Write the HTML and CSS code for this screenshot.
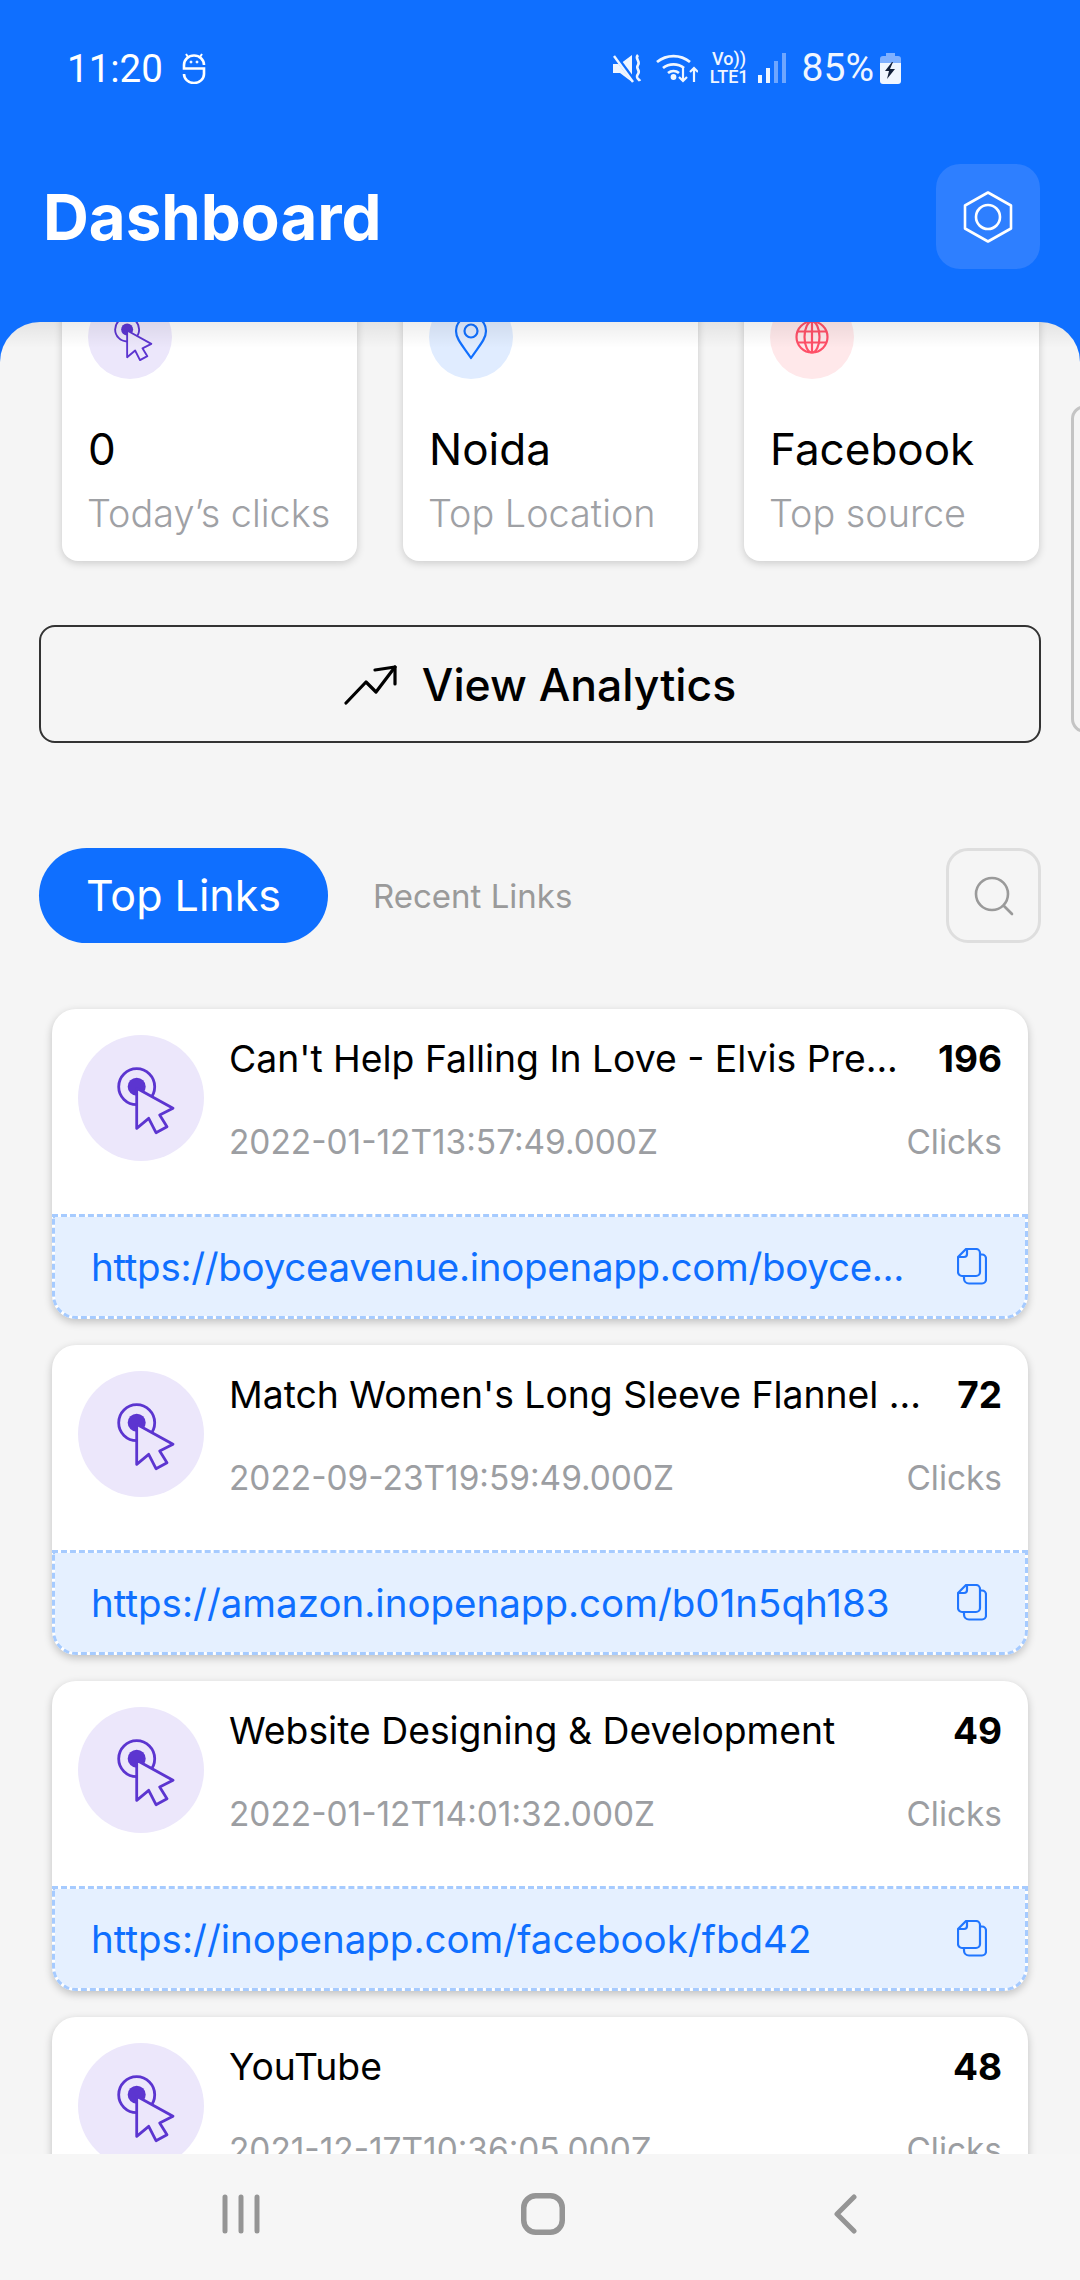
FILE: index.html
```html
<!DOCTYPE html>
<html lang="en">
<head>
    <meta charset="UTF-8">
    <meta name="viewport" content="width=device-width, initial-scale=1.0">
    <title>Dashboard</title>
    <link rel="stylesheet" href="styles.css">
</head>
<body>

    <svg class="defs" width="0" height="0">
        <symbol id="click" viewBox="0 0 126 126">
            <circle cx="58.7" cy="51.7" r="18" fill="none" stroke="#5c35d0" stroke-width="2.800"/>
            <circle cx="58.7" cy="51.7" r="9" fill="#5c35d0"/>
            <path d="M58.7 53.3 95 73.3 81.7 80 89 91.7 78 97.7 70.7 83.3 58.7 93.3Z" fill="#ece7fb" stroke="#5c35d0" stroke-width="2.800" stroke-linejoin="round"/>
        </symbol>
        <symbol id="copy" viewBox="0 0 30 37">
            <path d="M7 27v3.500a5 5 0 0 0 5 5h13a4 4 0 0 0 4-4v-21a4 4 0 0 0-4-4h-2" fill="none" stroke="#2176ff" stroke-width="2.200"/>
            <path d="M1 9 9 1h10a4 4 0 0 1 4 4v19a4 4 0 0 1-4 4H5a4 4 0 0 1-4-4Z" fill="none" stroke="#2176ff" stroke-width="2.200" stroke-linejoin="round"/>
            <path d="M1 9h6a3 3 0 0 0 3-3V1" fill="none" stroke="#2176ff" stroke-width="2.200"/>
        </symbol>
    </svg>

    <div class="app">
        <header class="header">
            <div class="status">
                <div class="status-left">
                    <span class="time">11:20</span>
                    <svg class="bot" width="24" height="31" viewBox="0 0 24 31" fill="none" stroke="#fff" stroke-width="2.600">
                        <path d="M4 1 6 4M20 1 18 4" stroke-width="2"/>
                        <path d="M22 12A10 9.500 0 0 0 2 12V15.500H22V21A10 9 0 0 1 2 21"/>
                        <circle cx="9" cy="9" r="1" fill="#fff" stroke-width="1"/>
                        <circle cx="15" cy="9" r="1" fill="#fff" stroke-width="1"/>
                    </svg>
                </div>
                <div class="status-right">
                    <svg width="29" height="29" viewBox="0 0 29 29">
                        <path d="M0 10h7L19 1v27L7 19H0Z" fill="#f0f6ff"/>
                        <path d="M1 0 21 27" stroke="#0f6fff" stroke-width="4.500"/>
                        <path d="M1 2 20 28" stroke="#f0f6ff" stroke-width="2.400"/>
                        <path d="M25 1c-4 4 3 6 0 10s3 5 0 9 1 5 2 7" fill="none" stroke="#f0f6ff" stroke-width="2.600"/>
                    </svg>
                    <svg class="wifi" width="42" height="30" viewBox="0 0 42 30" fill="none" stroke="#f0f6ff" stroke-width="2.800">
                        <path d="M1 9a26 26 0 0 1 33 0"/>
                        <path d="M7 15a17 17 0 0 1 21 0"/>
                        <path d="M12 20a9 9 0 0 1 11 0"/>
                        <circle cx="17.500" cy="24" r="1.500" fill="#f0f6ff"/>
                        <path d="M27 14v14M23 24l4 4 4-4M38 29V15M34 19l4-4 4 4" stroke-width="2.200"/>
                    </svg>
                    <div class="volte"><span>Vo))</span><span>LTE1</span></div>
                    <div class="signal"><i class="s1"></i><i class="s2"></i><i class="s3"></i><i class="s4"></i></div>
                    <span class="battery-text">85%</span>
                    <svg width="21" height="31" viewBox="0 0 21 31">
                        <path d="M6 0h9v3h3a3 3 0 0 1 3 3v4H0V6a3 3 0 0 1 3-3h3Z" fill="#7fb0ff"/>
                        <path d="M0 10h21v18a3 3 0 0 1-3 3H3a3 3 0 0 1-3-3Z" fill="#f0f6ff"/>
                        <path d="M12 9 5 18h4l-2 8 8-10h-5l3-7Z" fill="#14213a"/>
                    </svg>
                </div>
            </div>
            <div class="title-row">
                <h1>Dashboard</h1>
                <button class="settings">
                    <svg width="50" height="52" viewBox="0 0 50 52" fill="none" stroke="#fff" stroke-width="2.600" stroke-linejoin="round">
                        <path d="M25 1.500 48 14.500v23L25 50.500 2 37.500v-23Z"/>
                        <circle cx="25" cy="26" r="12"/>
                    </svg>
                </button>
            </div>
        </header>

        <main class="panel">
            <div class="content">
                <div class="stats">
                    <div class="stat">
                        <div class="circle purple"><svg width="84" height="84"><use href="#click"/></svg></div>
                        <div class="stat-value">0</div>
                        <div class="stat-label">Today’s clicks</div>
                    </div>
                    <div class="stat">
                        <div class="circle blue">
                            <svg width="34" height="46" viewBox="0 0 34 46" fill="none" stroke="#1170ff" stroke-width="2.200">
                                <path d="M17 44C9 32 2 25 2 17a15 15 0 0 1 30 0c0 8-7 15-15 27Z" stroke-linejoin="round"/>
                                <circle cx="17" cy="17" r="6.500"/>
                            </svg>
                        </div>
                        <div class="stat-value">Noida</div>
                        <div class="stat-label">Top Location</div>
                    </div>
                    <div class="stat">
                        <div class="circle red">
                            <svg width="34" height="34" viewBox="0 0 34 34" fill="none" stroke="#ff5068" stroke-width="2.200">
                                <circle cx="17" cy="17" r="15.500"/>
                                <ellipse cx="17" cy="17" rx="7.500" ry="15.500"/>
                                <path d="M17 1.500v31M2 11.500h30M2 22.500h30"/>
                            </svg>
                        </div>
                        <div class="stat-value">Facebook</div>
                        <div class="stat-label">Top source</div>
                    </div>
                </div>

                <button class="analytics">
                    <svg width="54" height="40" viewBox="0 0 54 40" fill="none" stroke="#000" stroke-width="3.200" stroke-linecap="round" stroke-linejoin="round">
                        <path d="M2 38 22 17l10 10L51 2"/>
                        <path d="M31 5 51 2v17"/>
                    </svg>
                    View Analytics
                </button>

                <div class="tabs">
                    <div class="tab-active">Top Links</div>
                    <div class="tab">Recent Links</div>
                    <button class="search">
                        <svg width="40" height="40" viewBox="0 0 40 40" fill="none" stroke="#9a9a9a" stroke-width="2.600" stroke-linecap="round">
                            <circle cx="18" cy="18" r="16"/>
                            <path d="M30 30 38 38"/>
                        </svg>
                    </button>
                </div>

                <div class="links">
                    <div class="link-card">
                        <div class="link-top">
                            <div class="circle big purple"><svg width="126" height="126"><use href="#click"/></svg></div>
                            <div class="link-info">
                                <div class="link-row">
                                    <span class="link-title">Can't Help Falling In Love - Elvis Pre...</span>
                                    <span class="link-count">196</span>
                                </div>
                                <div class="link-row sub">
                                    <span>2022-01-12T13:57:49.000Z</span>
                                    <span>Clicks</span>
                                </div>
                            </div>
                        </div>
                        <div class="link-url">
                            <span class="tight">https://boyceavenue.inopenapp.com/boyce...</span>
                            <svg width="30" height="37"><use href="#copy"/></svg>
                        </div>
                    </div>
                    <div class="link-card">
                        <div class="link-top">
                            <div class="circle big purple"><svg width="126" height="126"><use href="#click"/></svg></div>
                            <div class="link-info">
                                <div class="link-row">
                                    <span class="link-title">Match Women's Long Sleeve Flannel ...</span>
                                    <span class="link-count">72</span>
                                </div>
                                <div class="link-row sub">
                                    <span>2022-09-23T19:59:49.000Z</span>
                                    <span>Clicks</span>
                                </div>
                            </div>
                        </div>
                        <div class="link-url">
                            <span>https://amazon.inopenapp.com/b01n5qh183</span>
                            <svg width="30" height="37"><use href="#copy"/></svg>
                        </div>
                    </div>
                    <div class="link-card">
                        <div class="link-top">
                            <div class="circle big purple"><svg width="126" height="126"><use href="#click"/></svg></div>
                            <div class="link-info">
                                <div class="link-row">
                                    <span class="link-title">Website Designing &amp; Development</span>
                                    <span class="link-count">49</span>
                                </div>
                                <div class="link-row sub">
                                    <span>2022-01-12T14:01:32.000Z</span>
                                    <span>Clicks</span>
                                </div>
                            </div>
                        </div>
                        <div class="link-url">
                            <span>https://inopenapp.com/facebook/fbd42</span>
                            <svg width="30" height="37"><use href="#copy"/></svg>
                        </div>
                    </div>
                    <div class="link-card">
                        <div class="link-top">
                            <div class="circle big purple"><svg width="126" height="126"><use href="#click"/></svg></div>
                            <div class="link-info">
                                <div class="link-row">
                                    <span class="link-title">YouTube</span>
                                    <span class="link-count">48</span>
                                </div>
                                <div class="link-row sub">
                                    <span>2021-12-17T10:36:05.000Z</span>
                                    <span>Clicks</span>
                                </div>
                            </div>
                        </div>
                    </div>
                </div>
            </div>
            <div class="peek"></div>
            <div class="fade"></div>
        </main>

        <nav class="nav">
            <svg width="38" height="40" viewBox="0 0 38 40" fill="none" stroke="#959595" stroke-width="5" stroke-linecap="round">
                <path d="M3 3v34M19 3v34M35 3v34"/>
            </svg>
            <svg width="44" height="42" viewBox="0 0 44 42" fill="none" stroke="#959595" stroke-width="5.500">
                <rect x="2.750" y="2.750" width="38.500" height="36.500" rx="12"/>
            </svg>
            <svg width="24" height="40" viewBox="0 0 24 40" fill="none" stroke="#959595" stroke-width="5" stroke-linecap="round" stroke-linejoin="round">
                <path d="M21 3 4 20l17 17"/>
            </svg>
        </nav>
    </div>

</body>
</html>
```

FILE: styles.css
```css
* {
    box-sizing: border-box;
}
body {
    margin: 0;
    font-family: Inter, "Noto Sans", sans-serif;
    background-color: #0f6fff;
}
button {
    font-family: inherit;
    cursor: pointer;
}
.defs {
    display: block;
    height: 0;
}
.app {
    width: 1080px;
    height: 2280px;
    display: flex;
    flex-direction: column;
    overflow: hidden;
    background-color: #0f6fff;
}

/* header */
.header {
    height: 322px;
    flex: none;
    color: white;
}
.status {
    height: 136px;
    display: flex;
    justify-content: space-between;
    align-items: center;
    padding: 0 179px 0 67px;
    font-family: Roboto, sans-serif;
}
.status-left,
.status-right {
    display: flex;
    align-items: center;
}
.time {
    font-size: 38.5px;
    margin-right: 19px;
}
.status-right svg {
    flex: none;
}
.wifi {
    margin-left: 14px;
}
.volte {
    display: flex;
    flex-direction: column;
    align-items: center;
    width: 39px;
    margin-left: 12px;
    font-size: 18px;
    font-weight: 500;
    line-height: 18px;
    color: #f0f6ff;
}
.signal {
    display: flex;
    align-items: flex-end;
    gap: 4px;
    height: 30px;
    margin-left: 9px;
}
.signal i {
    display: block;
    width: 4px;
    background-color: #f0f6ff;
}
.signal .s1 { height: 8px; }
.signal .s2 { height: 15px; }
.signal .s3 { height: 22px; background-color: #6ea6ff; }
.signal .s4 { height: 30px; background-color: #6ea6ff; }
.battery-text {
    font-size: 39px;
    margin-left: 16px;
    margin-right: 6px;
    color: #f0f6ff;
}
.title-row {
    display: flex;
    justify-content: space-between;
    align-items: center;
    margin-top: 28px;
    padding: 0 40px 0 43px;
}
h1 {
    margin: 0;
    font-size: 63.5px;
    font-weight: 700;
}
.settings {
    width: 104px;
    height: 105px;
    display: flex;
    align-items: center;
    justify-content: center;
    border: none;
    border-radius: 24px;
    background-color: #2e7fff;
}

/* scrolled panel */
.panel {
    flex: 1;
    position: relative;
    overflow: hidden;
    background-color: #f5f5f5;
    border-radius: 40px 40px 0 0;
}
.content {
    margin-top: -52px;
}
.fade {
    position: absolute;
    top: 0;
    left: 0;
    right: 0;
    height: 26px;
    background: linear-gradient(rgba(0, 0, 0, 0.07), rgba(0, 0, 0, 0));
}
.peek {
    position: absolute;
    left: 1071px;
    top: 83px;
    width: 30px;
    height: 328px;
    border: 3px solid #c4c4c4;
    border-radius: 14px;
}
.stats {
    display: flex;
    gap: 46px;
    padding-left: 62px;
}
.stat {
    width: 295px;
    height: 291px;
    flex: none;
    padding: 25px 26px 0;
    background-color: #fff;
    border-radius: 16px;
    box-shadow: 0px 2px 8px rgba(0, 0, 0, 0.18);
}
.circle {
    display: flex;
    align-items: center;
    justify-content: center;
    width: 84px;
    height: 84px;
    border-radius: 50%;
    flex: none;
}
.circle.big {
    width: 126px;
    height: 126px;
}
.purple { background-color: #ece7fb; }
.blue { background-color: #e0ecff; }
.red { background-color: #ffe8ea; }
.stat-value {
    margin-top: 42px;
    font-size: 44px;
    line-height: 56px;
    color: #000;
}
.stat-label {
    margin: 12px 0 0 -1px;
    font-size: 37.8px;
    font-weight: 300;
    line-height: 48px;
    color: #9fa1a5;
    white-space: nowrap;
}
.analytics {
    display: flex;
    align-items: center;
    justify-content: center;
    gap: 24px;
    width: 1002px;
    height: 118px;
    margin: 64px 0 0 39px;
    padding: 2px 0 0;
    background: none;
    border: 2px solid #333;
    border-radius: 16px;
    font-size: 44.5px;
    font-weight: 500;
    color: #000;
}
.tabs {
    display: flex;
    align-items: center;
    margin-top: 105px;
    padding: 0 39px 0 39px;
}
.tab-active {
    width: 289px;
    height: 95px;
    line-height: 95px;
    text-align: center;
    background-color: #0f6fff;
    border-radius: 48px;
    font-size: 43px;
    color: white;
}
.tab {
    margin-left: 45px;
    font-size: 33px;
    color: #9a9a9a;
}
.search {
    width: 95px;
    height: 95px;
    margin-left: auto;
    display: flex;
    align-items: center;
    justify-content: center;
    background: none;
    border: 3px solid #dedede;
    border-radius: 22px;
}

/* link cards */
.links {
    display: flex;
    flex-direction: column;
    gap: 26px;
    margin-top: 66px;
    padding-left: 52px;
}
.link-card {
    width: 976px;
    height: 310px;
    flex: none;
    background-color: #fff;
    border-radius: 24px;
    box-shadow: 0px 3px 8px rgba(0, 0, 0, 0.22);
}
.link-top {
    height: 205px;
    display: flex;
    gap: 25px;
    padding: 26px 26px 0;
}
.link-info {
    flex: 1;
}
.link-row {
    display: flex;
    justify-content: space-between;
    align-items: center;
    height: 46px;
    font-size: 37.3px;
    color: #000;
    white-space: nowrap;
}
.link-count {
    font-size: 37px;
    font-weight: 700;
}
.link-row.sub {
    margin-top: 38px;
    font-size: 33.4px;
    color: #9c9ea2;
}
.link-url {
    height: 105px;
    display: flex;
    justify-content: space-between;
    align-items: center;
    padding: 0 38px 0 36px;
    background-color: #e5f0ff;
    background-clip: padding-box;
    border: 3px dashed #a6cbff;
    border-radius: 0 0 24px 24px;
    font-size: 38.5px;
    color: #0f6fff;
    white-space: nowrap;
}
.tight {
    letter-spacing: -0.3px;
}

/* android nav */
.nav {
    height: 126px;
    flex: none;
    display: grid;
    grid-template-columns: repeat(3, 302px);
    justify-content: center;
    justify-items: center;
    align-items: center;
    padding: 0 0 6px 6px;
    background-color: #f6f6f6;
}
```
